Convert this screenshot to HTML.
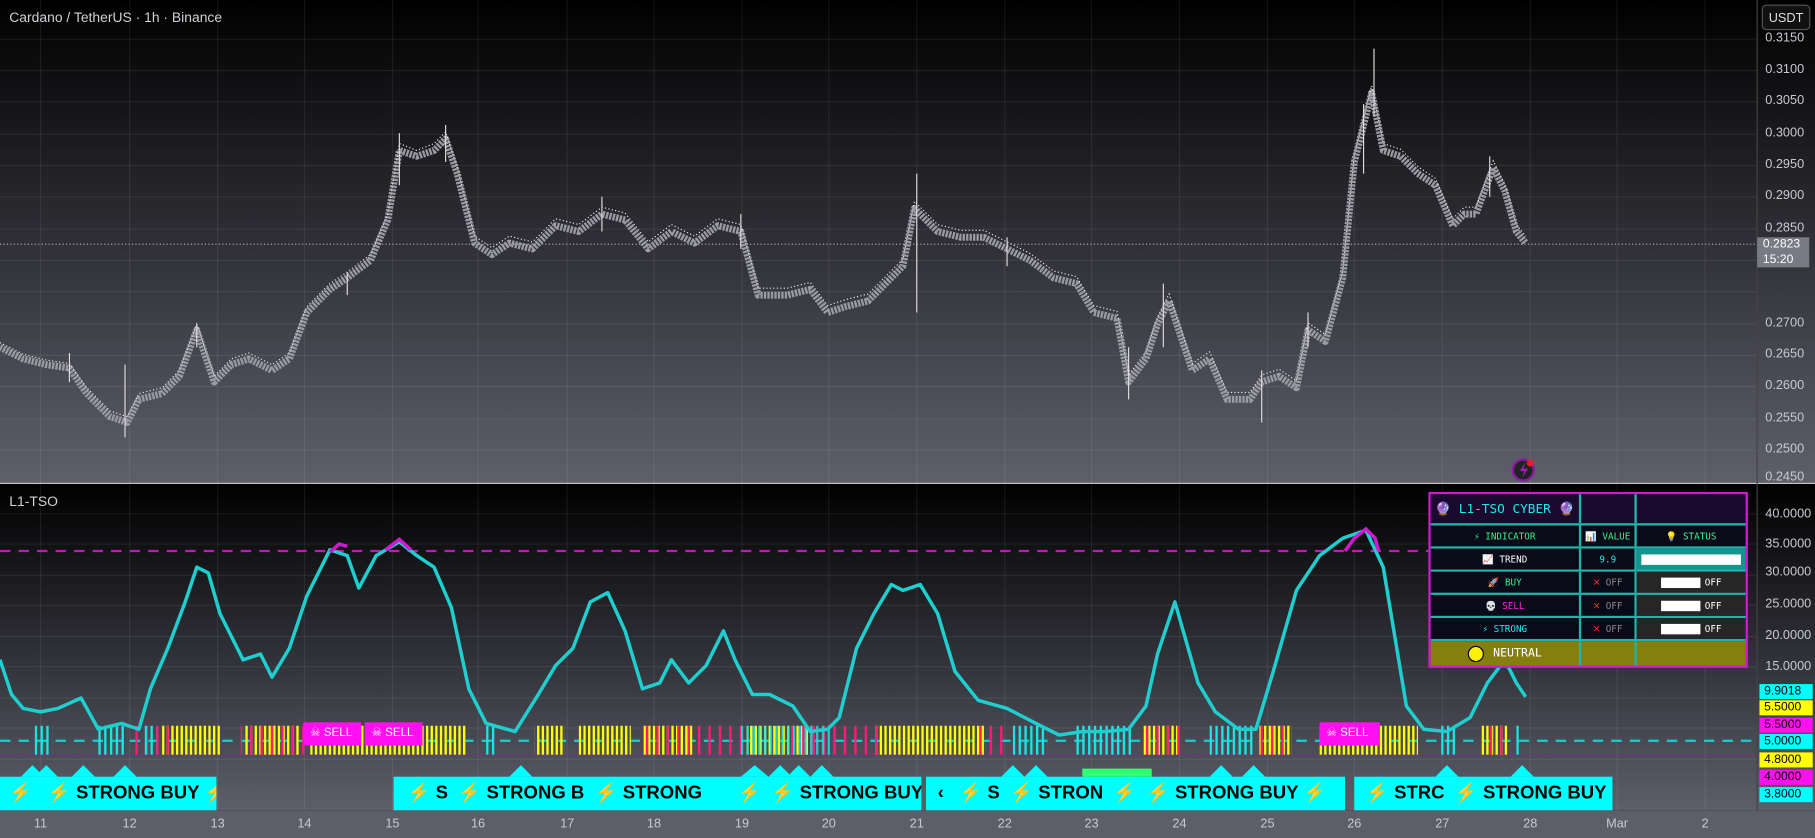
<!DOCTYPE html>
<html><head><meta charset="utf-8"><style>
html,body{margin:0;padding:0;width:1815px;height:838px;overflow:hidden;background:#000}
#w{position:absolute;left:0;top:0;width:1568px;height:724px;transform:scale(1.15753);transform-origin:0 0;font-family:"Liberation Sans",sans-serif;overflow:hidden}
.ax{position:absolute;color:#c8c9cf;font-size:11px}
.t{position:absolute;top:706px;color:#c8c9cf;font-size:11px;transform:translateX(-50%)}
.pl{position:absolute;left:1520px;width:46px;height:13px;font-size:10.5px;color:#000;text-align:left;padding-left:4px;line-height:13px;box-sizing:border-box}
.tb{position:absolute;left:1234px;top:425px;width:276px;height:152px;border:2px solid #d21ad2;box-sizing:border-box;font-family:"DejaVu Sans Mono",monospace}
.r{position:absolute;left:0;width:272px;display:flex;border-bottom:2px solid #1fb5aa;box-sizing:border-box}
.c{border-right:2px solid #1fb5aa;box-sizing:border-box;display:flex;align-items:center;justify-content:center;font-size:8px}
.sb{position:absolute;top:671px;height:29px;background:#00ffff;overflow:hidden;white-space:nowrap;font-weight:bold;font-size:16px;line-height:29px;color:#000;box-sizing:border-box}
.sl{position:absolute;top:624px;height:20px;background:#ff10ee;color:#fff;font-size:10px;line-height:20px;padding-left:6px;box-sizing:border-box}
</style></head><body><div id="w">
<svg width="1568" height="724" style="position:absolute;left:0;top:0">
<defs>
<linearGradient id="g1" x1="0" y1="0" x2="0" y2="1"><stop offset="0" stop-color="#000"/><stop offset="1" stop-color="#5e5f6b"/></linearGradient>
<linearGradient id="g2" x1="0" y1="0" x2="0" y2="1"><stop offset="0" stop-color="#000"/><stop offset="1" stop-color="#5c5e6a"/></linearGradient>
<pattern id="py" width="4" height="30" patternUnits="userSpaceOnUse"><rect width="2" height="30" fill="#ffff00"/></pattern>
<pattern id="pc" width="5" height="30" patternUnits="userSpaceOnUse"><rect width="2" height="30" fill="#19e6e6"/></pattern>
<pattern id="pm" width="9" height="30" patternUnits="userSpaceOnUse"><rect width="2" height="30" fill="#ff1a7a"/></pattern>
<pattern id="pw" width="3" height="6" patternUnits="userSpaceOnUse"><rect width="1" height="6" fill="#ffffff"/></pattern>
</defs>
<rect width="1568" height="417" fill="url(#g1)"/>
<rect y="418" width="1568" height="282" fill="url(#g2)"/>
<rect y="700" width="1568" height="24" fill="#5d5e69"/>
<g stroke="#ffffff" stroke-opacity="0.07">
<path d="M35 0V700M112 0V700M188 0V700M263 0V700M339 0V700M413 0V700M490 0V700M565 0V700M641 0V700M716 0V700M792 0V700M868 0V700M943 0V700M1019 0V700M1095 0V700M1170 0V700M1246 0V700M1322 0V700M1397 0V700M1473 0V700"/>
<path d="M0 34H1518M0 61H1518M0 88H1518M0 116H1518M0 143H1518M0 170H1518M0 198H1518M0 225H1518M0 252H1518M0 280H1518M0 307H1518M0 334H1518M0 362H1518M0 389H1518M0 444H1518M0 470H1518M0 497H1518M0 523H1518M0 550H1518M0 576H1518M0 603H1518M0 629H1518M0 656H1518"/>
</g>
<line x1="0" y1="417.5" x2="1568" y2="417.5" stroke="#e0e0e0" stroke-width="1"/>
<line x1="1518" y1="0" x2="1518" y2="700" stroke="#444" />
<line x1="0" y1="211" x2="1518" y2="211" stroke="#aaa" stroke-dasharray="1 2"/>
<polyline fill="none" stroke="#9a9aa2" stroke-width="6" stroke-linejoin="round" stroke-dasharray="2 1" points="0,300 20,310 40,315 60,318 75,340 95,360 110,365 120,345 140,340 155,325 170,285 185,330 200,315 215,310 235,320 250,310 265,270 285,250 300,240 320,225 335,190 345,130 360,135 375,130 385,120 395,150 410,210 425,220 440,210 460,215 480,195 500,200 520,185 540,190 560,215 580,200 600,210 620,195 640,200 655,255 680,255 700,250 715,270 730,265 750,260 770,240 780,230 790,180 810,200 830,205 850,205 870,215 890,225 910,240 930,245 945,270 965,275 975,330 990,310 1000,280 1010,260 1020,290 1030,320 1045,310 1060,345 1080,345 1090,330 1105,325 1120,335 1130,285 1145,295 1160,240 1170,140 1185,80 1195,130 1210,135 1225,150 1240,160 1255,195 1265,185 1275,185 1290,145 1300,165 1310,200 1318,210"/>
<polyline fill="none" stroke="#eeeeee" stroke-width="1" stroke-dasharray="1 2" points="0,296 20,306 40,311 60,314 75,335 95,355 110,360 120,340 140,335 155,320 170,280 185,325 200,310 215,305 235,315 250,305 265,265 285,245 300,235 320,220 335,185 345,124 360,130 375,124 385,114 395,145 410,204 425,214 440,204 460,209 480,189 500,194 520,179 540,184 560,209 580,194 600,204 620,189 640,194 655,249 680,249 700,244 715,264 730,259 750,254 770,234 780,224 790,174 810,194 830,199 850,199 870,209 890,219 910,234 930,239 945,264 965,269 975,324 990,304 1000,274 1010,254 1020,284 1030,314 1045,304 1060,339 1080,339 1090,324 1105,319 1120,329 1130,279 1145,289 1160,234 1170,134 1185,74 1195,124 1210,129 1225,144 1240,154 1255,189 1265,179 1275,179 1290,139 1300,159 1310,194 1318,204"/>
<g stroke="#ddd" stroke-width="1"><path d="M108 315V378M345 115V160M385 108V140M792 150V270M1187 42V100M1178 90V150M1090 320V365M975 300V345M1005 245V300M1287 135V170M60 305V330M170 280V300M300 235V255M520 170V200M640 185V215M870 205V230M1130 270V300"/></g>
<circle cx="1316" cy="406" r="9" fill="#222" stroke="#8a1aa0" stroke-width="2"/><path d="M1318 399l-5 8h4l-2 6 5-8h-4z" fill="#a020c0"/><circle cx="1322" cy="400" r="3" fill="#e02030"/>
<line x1="0" y1="476" x2="1234" y2="476" stroke="#c018c0" stroke-width="2" stroke-dasharray="9 7"/>
<line x1="0" y1="640" x2="1518" y2="640" stroke="#19c8c8" stroke-width="2" stroke-dasharray="9 7"/>
<line x1="0" y1="652" x2="1518" y2="652" stroke="#8a1aa0" stroke-width="1" stroke-dasharray="1 1"/>
<g>
<rect x="140" y="627" width="50" height="25" fill="url(#py)"/>
<rect x="210" y="627" width="50" height="25" fill="url(#py)"/>
<rect x="268" y="627" width="135" height="25" fill="url(#py)"/>
<rect x="462" y="627" width="26" height="25" fill="url(#py)"/>
<rect x="500" y="627" width="45" height="25" fill="url(#py)"/>
<rect x="556" y="627" width="44" height="25" fill="url(#py)"/>
<rect x="645" y="627" width="55" height="25" fill="url(#py)"/>
<rect x="756" y="627" width="95" height="25" fill="url(#py)"/>
<rect x="988" y="627" width="30" height="25" fill="url(#py)"/>
<rect x="1086" y="627" width="30" height="25" fill="url(#py)"/>
<rect x="1140" y="627" width="85" height="25" fill="url(#py)"/>
<rect x="1280" y="627" width="22" height="25" fill="url(#py)"/>
<rect x="110" y="627" width="40" height="25" fill="url(#pm)"/>
<rect x="208" y="627" width="60" height="25" fill="url(#pm)"/>
<rect x="555" y="627" width="90" height="25" fill="url(#pm)"/>
<rect x="680" y="627" width="80" height="25" fill="url(#pm)"/>
<rect x="840" y="627" width="30" height="25" fill="url(#pm)"/>
<rect x="985" y="627" width="40" height="25" fill="url(#pm)"/>
<rect x="1085" y="627" width="30" height="25" fill="url(#pm)"/>
<rect x="1280" y="627" width="25" height="25" fill="url(#pm)"/>
<rect x="30" y="627" width="15" height="25" fill="url(#pc)"/>
<rect x="84" y="627" width="24" height="25" fill="url(#pc)"/>
<rect x="125" y="627" width="10" height="25" fill="url(#pc)"/>
<rect x="418" y="627" width="10" height="25" fill="url(#pc)"/>
<rect x="640" y="627" width="80" height="25" fill="url(#pc)" opacity="0.8"/>
<rect x="875" y="627" width="30" height="25" fill="url(#pc)"/>
<rect x="930" y="627" width="48" height="25" fill="url(#pc)"/>
<rect x="1045" y="627" width="40" height="25" fill="url(#pc)"/>
<rect x="1245" y="627" width="15" height="25" fill="url(#pc)"/>
<rect x="1310" y="627" width="4" height="25" fill="url(#pc)"/>
</g>
<polyline fill="none" stroke="#1fcfcf" stroke-width="3" stroke-linejoin="round" points="0,570 10,600 20,612 35,615 50,612 70,603 85,630 105,625 120,630 130,595 145,560 160,520 170,490 180,495 190,530 210,570 225,565 235,585 250,560 265,515 285,475 300,480 310,508 325,480 345,468 360,480 375,490 390,525 405,595 420,625 445,632 465,600 480,575 495,560 510,520 525,512 540,545 555,595 570,590 580,570 595,590 610,575 625,545 635,570 650,600 665,600 685,610 700,632 715,630 725,620 740,560 755,530 770,505 780,510 795,505 810,530 825,580 845,605 870,612 895,625 915,635 935,632 955,632 975,630 990,610 1000,565 1015,520 1025,555 1035,590 1050,615 1070,630 1085,630 1100,580 1120,510 1140,480 1160,465 1180,458 1195,490 1215,610 1230,630 1250,632 1270,620 1285,590 1300,570 1310,590 1318,602"/>
<g fill="none" stroke="#d01ad0" stroke-width="3"><polyline points="285,477 293,470 300,472"/><polyline points="333,475 345,466 355,475"/><polyline points="1162,476 1170,465 1180,457 1188,465 1191,476"/></g>
<g fill="#00ffff"><path d="M18 671l10-10 6 6 6-6 10 10zM62 671l10-10 10 10zM98 671l10-10 10 10zM440 671l10-10 10 10zM640 671l12-10 12 10 10-10 10 10zM680 671l10-10 10 10 10-10 10 10zM865 671l10-10 10 10 10-10 10 10zM1045 671l10-10 10 10zM1073 671l10-10 10 10zM1240 671l10-10 10 10zM1305 671l10-10 10 10z"/></g>
<rect x="935" y="664" width="60" height="7" fill="#30ff70"/>
</svg>
<div style="position:absolute;left:8px;top:8px;color:#d0d1d6;font-size:12px">Cardano / TetherUS · 1h · Binance</div>
<div style="position:absolute;left:8px;top:426px;color:#d0d1d6;font-size:12px">L1-TSO</div>
<div style="position:absolute;left:1522px;top:4px;width:42px;height:22px;border:1px solid #555;border-radius:4px;background:#111;color:#ddd;font-size:11px;text-align:center;line-height:22px;box-sizing:border-box">USDT</div>
<div class="ax" style="left:1525px;top:27px">0.3150</div><div class="ax" style="left:1525px;top:54px">0.3100</div><div class="ax" style="left:1525px;top:81px">0.3050</div><div class="ax" style="left:1525px;top:109px">0.3000</div><div class="ax" style="left:1525px;top:136px">0.2950</div><div class="ax" style="left:1525px;top:163px">0.2900</div><div class="ax" style="left:1525px;top:191px">0.2850</div><div class="ax" style="left:1525px;top:273px">0.2700</div><div class="ax" style="left:1525px;top:300px">0.2650</div><div class="ax" style="left:1525px;top:327px">0.2600</div><div class="ax" style="left:1525px;top:355px">0.2550</div><div class="ax" style="left:1525px;top:382px">0.2500</div><div class="ax" style="left:1525px;top:406px">0.2450</div>
<div style="position:absolute;left:1518px;top:205px;width:40px;height:26px;background:#787a84;color:#fff;font-size:10.5px;line-height:13px;padding-left:5px">0.2823<br>15:20</div>
<div class="ax" style="left:1525px;top:438px">40.0000</div><div class="ax" style="left:1525px;top:464px">35.0000</div><div class="ax" style="left:1525px;top:488px">30.0000</div><div class="ax" style="left:1525px;top:516px">25.0000</div><div class="ax" style="left:1525px;top:543px">20.0000</div><div class="ax" style="left:1525px;top:570px">15.0000</div>
<div class="pl" style="top:591px;background:#00ffff">9.9018</div><div class="pl" style="top:605px;background:#ffff00">5.5000</div><div class="pl" style="top:620px;background:#ff10ee">5.5000</div><div class="pl" style="top:634px;background:#00ffff">5.0000</div><div class="pl" style="top:650px;background:#ffff00">4.8000</div><div class="pl" style="top:665px;background:#ff10ee">4.0000</div><div class="pl" style="top:680px;background:#00ffff">3.8000</div>
<div class="t" style="left:35px">11</div><div class="t" style="left:112px">12</div><div class="t" style="left:188px">13</div><div class="t" style="left:263px">14</div><div class="t" style="left:339px">15</div><div class="t" style="left:413px">16</div><div class="t" style="left:490px">17</div><div class="t" style="left:565px">18</div><div class="t" style="left:641px">19</div><div class="t" style="left:716px">20</div><div class="t" style="left:792px">21</div><div class="t" style="left:868px">22</div><div class="t" style="left:943px">23</div><div class="t" style="left:1019px">24</div><div class="t" style="left:1095px">25</div><div class="t" style="left:1170px">26</div><div class="t" style="left:1246px">27</div><div class="t" style="left:1322px">28</div><div class="t" style="left:1397px">Mar</div><div class="t" style="left:1473px">2</div>
<div class="sl" style="left:262px;width:50px">☠ SELL</div><div class="sl" style="left:315px;width:50px">☠ SELL</div><div class="sl" style="left:1140px;width:52px">☠ SELL</div>
<div class="sb" style="left:0;width:187px;padding-left:8px"><span style="color:#f0a020">⚡</span> &nbsp; <span style="color:#f0a020">⚡</span> STRONG BUY <span style="color:#f0a020">⚡</span></div>
<div class="sb" style="left:340px;width:456px;padding-left:12px"><span style="color:#f0a020">⚡</span> S &nbsp;<span style="color:#f0a020">⚡</span> STRONG B &nbsp;<span style="color:#f0a020">⚡</span> STRONG &nbsp; &nbsp; &nbsp; <span style="color:#f0a020">⚡</span> &nbsp;<span style="color:#f0a020">⚡</span> STRONG BUY <span style="color:#f0a020">⚡</span></div>
<div class="sb" style="left:800px;width:362px;padding-left:10px">‹ &nbsp; <span style="color:#f0a020">⚡</span> S &nbsp;<span style="color:#f0a020">⚡</span> STRON &nbsp;<span style="color:#f0a020">⚡</span> &nbsp;<span style="color:#f0a020">⚡</span> STRONG BUY <span style="color:#f0a020">⚡</span></div>
<div class="sb" style="left:1170px;width:223px;padding-left:10px"><span style="color:#f0a020">⚡</span> STRC &nbsp;<span style="color:#f0a020">⚡</span> STRONG BUY <span style="color:#f0a020">⚡</span></div>
<div class="tb">
<div class="r" style="top:0;height:27px;background:#1a0a2e"><div class="c" style="width:130px;color:#22e8e8;font-size:11px">🔮 L1-TSO CYBER 🔮</div><div class="c" style="width:48px"></div><div class="c" style="width:94px;border-right:0"></div></div>
<div class="r" style="top:27px;height:20px;background:#0a0a18"><div class="c" style="width:130px;color:#3cf08c">⚡ INDICATOR</div><div class="c" style="width:48px;color:#3cf08c">📊 VALUE</div><div class="c" style="width:94px;border-right:0;color:#3cf08c">💡 STATUS</div></div>
<div class="r" style="top:47px;height:20px;background:#0a0a18"><div class="c" style="width:130px;color:#fff">📈 TREND</div><div class="c" style="width:48px;color:#22e8e8">9.9</div><div class="c" style="width:94px;border-right:0;background:#17928e"><div style="width:86px;height:9px;background:#fff"></div></div></div>
<div class="r" style="top:67px;height:20px;background:#0a0a18"><div class="c" style="width:130px;color:#3cf08c">🚀 BUY</div><div class="c" style="width:48px;color:#888"><span style="color:#f03020;font-size:10px">✕</span>&nbsp;OFF</div><div class="c" style="width:94px;border-right:0;background:#262626;color:#fff"><div style="width:34px;height:9px;background:#fff;margin-right:4px"></div>OFF</div></div>
<div class="r" style="top:87px;height:20px;background:#0a0a18"><div class="c" style="width:130px;color:#ff20ee">💀 SELL</div><div class="c" style="width:48px;color:#888"><span style="color:#f03020;font-size:10px">✕</span>&nbsp;OFF</div><div class="c" style="width:94px;border-right:0;background:#262626;color:#fff"><div style="width:34px;height:9px;background:#fff;margin-right:4px"></div>OFF</div></div>
<div class="r" style="top:107px;height:20px;background:#0a0a18"><div class="c" style="width:130px;color:#22e8e8">⚡ STRONG</div><div class="c" style="width:48px;color:#888"><span style="color:#f03020;font-size:10px">✕</span>&nbsp;OFF</div><div class="c" style="width:94px;border-right:0;background:#262626;color:#fff"><div style="width:34px;height:9px;background:#fff;margin-right:4px"></div>OFF</div></div>
<div class="r" style="top:127px;height:21px;background:#857f10;border-bottom:0"><div class="c" style="width:130px;color:#fff;font-size:10px"><span style="display:inline-block;width:12px;height:12px;border-radius:50%;background:#ffef00;border:1px solid #000;margin-right:8px"></span>NEUTRAL</div><div class="c" style="width:48px"></div><div class="c" style="width:94px;border-right:0"></div></div>
</div>
</div></body></html>
